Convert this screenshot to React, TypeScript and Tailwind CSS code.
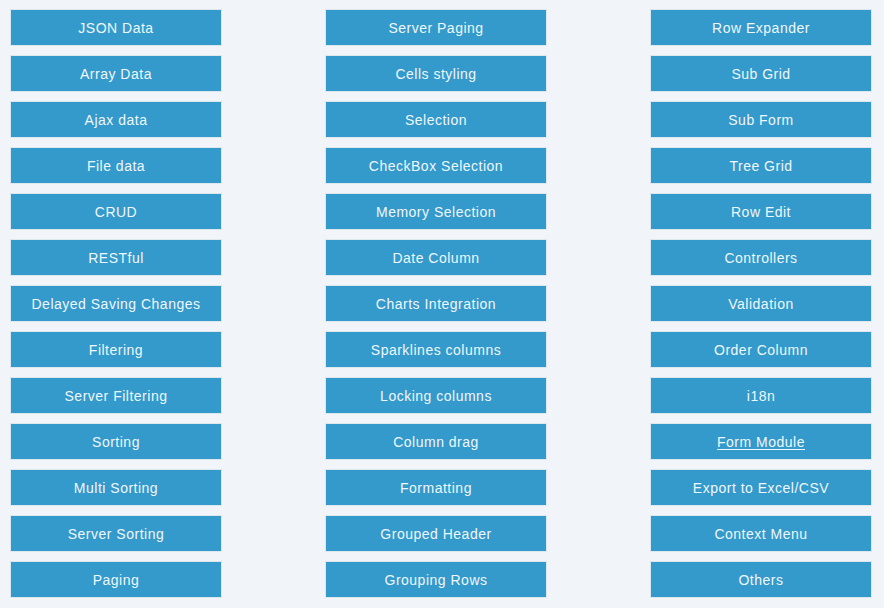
const columns: { label: string; link?: boolean }[][] = [
  [
    { label: "JSON Data" },
    { label: "Array Data" },
    { label: "Ajax data" },
    { label: "File data" },
    { label: "CRUD" },
    { label: "RESTful" },
    { label: "Delayed Saving Changes" },
    { label: "Filtering" },
    { label: "Server Filtering" },
    { label: "Sorting" },
    { label: "Multi Sorting" },
    { label: "Server Sorting" },
    { label: "Paging" },
  ],
  [
    { label: "Server Paging" },
    { label: "Cells styling" },
    { label: "Selection" },
    { label: "CheckBox Selection" },
    { label: "Memory Selection" },
    { label: "Date Column" },
    { label: "Charts Integration" },
    { label: "Sparklines columns" },
    { label: "Locking columns" },
    { label: "Column drag" },
    { label: "Formatting" },
    { label: "Grouped Header" },
    { label: "Grouping Rows" },
  ],
  [
    { label: "Row Expander" },
    { label: "Sub Grid" },
    { label: "Sub Form" },
    { label: "Tree Grid" },
    { label: "Row Edit" },
    { label: "Controllers" },
    { label: "Validation" },
    { label: "Order Column" },
    { label: "i18n" },
    { label: "Form Module", link: true },
    { label: "Export to Excel/CSV" },
    { label: "Context Menu" },
    { label: "Others" },
  ],
];

const widths = ["w-[212px]", "w-[222px] ml-[103px]", "w-[222px] ml-[103px]"];

export default function App() {
  return (
    <div
      className="min-h-screen bg-[#f1f5f9] pt-[9px] pl-[10px] flex"
      style={{ fontFamily: '"Liberation Sans", Arial, sans-serif' }}
    >
      {columns.map((col, i) => (
        <div key={i} className={`flex flex-col gap-[9px] ${widths[i]}`}>
          {col.map((item) => (
            <a
              key={item.label}
              href="#"
              className={`h-[37px] pt-[2px] flex items-center justify-center bg-[#3499cb] border border-[#dde7ee] text-[14px] tracking-[0.5px] text-[#eef7fc] ${
                item.link ? "underline underline-offset-2" : "no-underline"
              }`}
            >
              {item.label}
            </a>
          ))}
        </div>
      ))}
    </div>
  );
}
